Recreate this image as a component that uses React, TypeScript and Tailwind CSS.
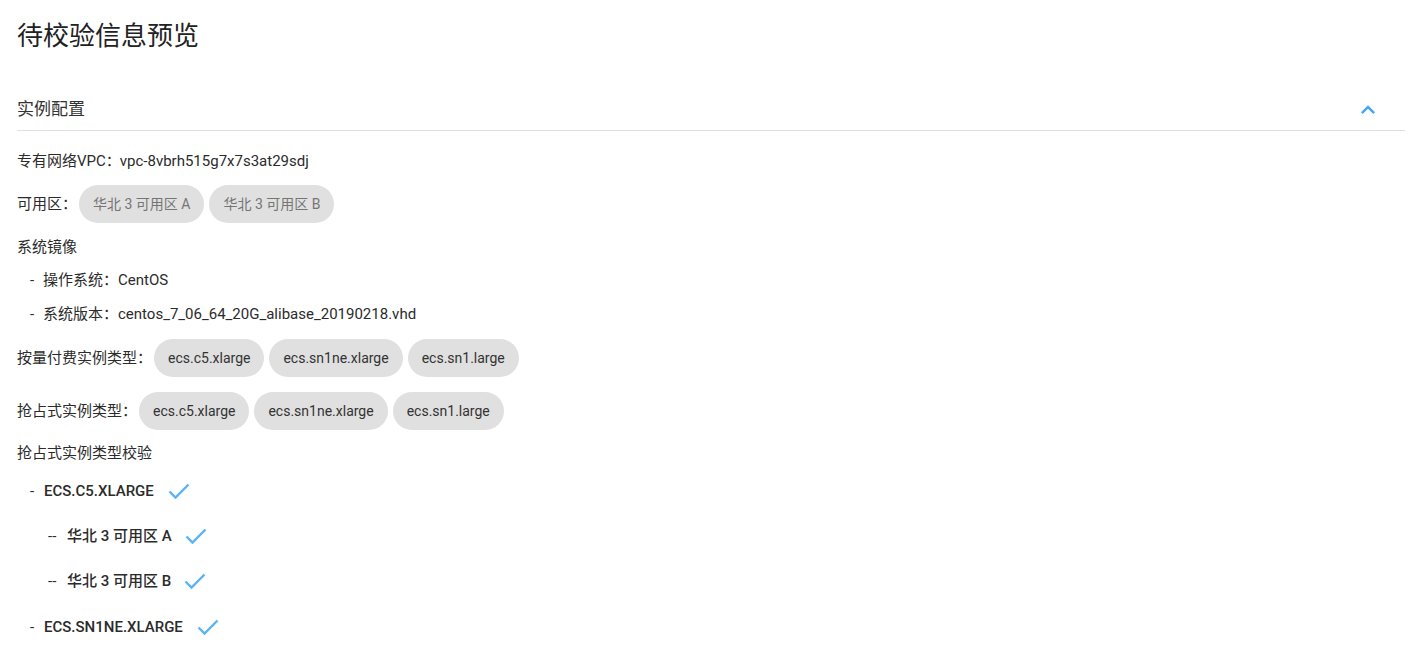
import React from 'react'

const font = { fontFamily: 'Roboto, "Noto Sans CJK SC", sans-serif' }

const Chip = ({ label, muted }: { label: string; muted?: boolean }) => (
  <span
    className={`inline-flex items-center h-[38px] px-[14px] rounded-full bg-[#e0e0e0] text-[14px] ${
      muted ? 'text-[#757575]' : 'text-[#333]'
    }`}
  >
    {label}
  </span>
)

const Check = () => (
  <svg viewBox="0 0 22 18" className="w-[22px] h-[18px]" fill="none">
    <polyline points="1.5,9.5 7.5,15.5 20.5,2.5" stroke="#5ab3f5" strokeWidth="2.4" />
  </svg>
)

const App = () => {
  const zones = ['华北 3 可用区 A', '华北 3 可用区 B']
  const types = ['ecs.c5.xlarge', 'ecs.sn1ne.xlarge', 'ecs.sn1.large']

  return (
    <div className="min-h-screen bg-white pl-[17px] pr-[13px] pt-[18px] text-[#2b2b2b]" style={font}>
      <h1 className="text-[26px] leading-[36px] font-normal text-[#222]">待校验信息预览</h1>

      {/* 实例配置 header */}
      <div className="mt-[32px] h-[45px] pt-[4px] flex items-center justify-between border-b border-[#e0e0e0]">
        <span className="text-[17px] text-[#333]">实例配置</span>
        <svg viewBox="0 0 24 24" className="w-[28px] h-[28px] mr-[23px] fill-[#42a5f5]">
          <path d="M12 8l-6 6 1.41 1.41L12 10.83l4.59 4.58L18 14z" />
        </svg>
      </div>

      <div className="text-[15px] leading-[20px]">
        <div className="mt-[20px] flex">
          <span>专有网络VPC：</span>
          <span className="-ml-[1px]">vpc-8vbrh515g7x7s3at29sdj</span>
        </div>

        <div className="mt-[14px] flex items-center">
          <span>可用区：</span>
          <div className="ml-[2px] flex gap-[5px]">
            {zones.map((z) => (
              <Chip key={z} label={z} muted />
            ))}
          </div>
        </div>

        <div className="mt-[14px]">系统镜像</div>
        <div className="mt-[13px] flex pl-[13px]">
          <span className="w-[13px]">-</span>
          <span>操作系统：CentOS</span>
        </div>
        <div className="mt-[14px] flex pl-[13px]">
          <span className="w-[13px]">-</span>
          <span>系统版本：centos_7_06_64_20G_alibase_20190218.vhd</span>
        </div>

        <div className="mt-[15px] flex items-center">
          <span>按量付费实例类型：</span>
          <div className="ml-[2px] flex gap-[5px]">
            {types.map((t) => (
              <Chip key={t} label={t} />
            ))}
          </div>
        </div>

        <div className="mt-[15px] flex items-center">
          <span>抢占式实例类型：</span>
          <div className="ml-[2px] flex gap-[5px]">
            {types.map((t) => (
              <Chip key={t} label={t} />
            ))}
          </div>
        </div>

        <div className="mt-[13px]">抢占式实例类型校验</div>

        {/* 校验结果 */}
        <div className="mt-[16px] flex items-center h-[24px] pl-[13px]">
          <span className="w-[14px]">-</span>
          <span className="font-medium">ECS.C5.XLARGE</span>
          <span className="ml-[14px] flex"><Check /></span>
        </div>
        <div className="mt-[21px] flex items-center h-[24px] pl-[31px]">
          <span className="w-[19px]">--</span>
          <span className="font-medium">华北 3 可用区 A</span>
          <span className="ml-[13px] flex"><Check /></span>
        </div>
        <div className="mt-[21px] flex items-center h-[24px] pl-[31px]">
          <span className="w-[19px]">--</span>
          <span className="font-medium">华北 3 可用区 B</span>
          <span className="ml-[13px] flex"><Check /></span>
        </div>
        <div className="mt-[22px] flex items-center h-[24px] pl-[13px]">
          <span className="w-[14px]">-</span>
          <span className="font-medium">ECS.SN1NE.XLARGE</span>
          <span className="ml-[14px] flex"><Check /></span>
        </div>
      </div>
    </div>
  )
}

export default App
